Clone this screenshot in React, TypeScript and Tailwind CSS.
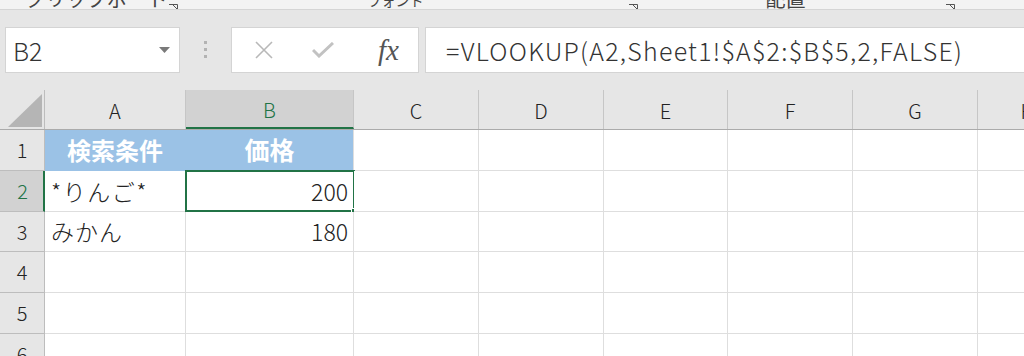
import React from "react";

const cols = [
  { key: "A", w: "w-[141px]" },
  { key: "B", w: "w-[168px]" },
  { key: "C", w: "w-[125px]" },
  { key: "D", w: "w-[125px]" },
  { key: "E", w: "w-[124px]" },
  { key: "F", w: "w-[125px]" },
  { key: "G", w: "w-[125px]" },
  { key: "H", w: "w-[100px]" },
];

const rows = [
  { n: 1, h: "h-[41px]" },
  { n: 2, h: "h-[41px]" },
  { n: 3, h: "h-[40px]" },
  { n: 4, h: "h-[41px]" },
  { n: 5, h: "h-[41px]" },
  { n: 6, h: "h-[41px]" },
];

const jp = { fontFamily: '"Noto Sans CJK JP", "Noto Sans", sans-serif' };

function Launcher({ className }: { className: string }) {
  return (
    <svg className={className} width="9" height="5" viewBox="0 0 9 5">
      <path d="M0 0.5h8.5V5" stroke="#555" strokeWidth="1" fill="none" />
      <path d="M4 1l4 4" stroke="#555" strokeWidth="1" />
    </svg>
  );
}

function RibbonStrip() {
  return (
    <div className="h-[10px] overflow-hidden border-b border-[#d5d5d5] bg-[#f3f3f3] leading-none text-[#444]">
      <div className="flex h-full items-start">
        <span className="ml-[25px] -mt-[11px] text-[20px] tracking-[0.5px]">クリップボード</span>
        <Launcher className="ml-[0px] mt-[4px]" />
        <span className="ml-[190px] -mt-[7px] text-[14px]">フォント</span>
        <Launcher className="ml-[205px] mt-[4px]" />
        <span className="ml-[128px] -mt-[11px] text-[20px]">配置</span>
        <Launcher className="ml-[140px] mt-[4px]" />
      </div>
    </div>
  );
}

function FormulaBar() {
  return (
    <div className="flex h-[80px] items-start bg-[#e6e6e6] pt-[17px]">
      <div className="ml-[5px] flex h-[46px] w-[175px] items-center justify-between border border-[#d4d4d4] bg-white pl-[7px] pr-[9px]">
        <span className="text-[25px] font-light leading-none text-[#333]">B2</span>
        <svg width="11" height="6" viewBox="0 0 11 6">
          <path d="M0 0h11L5.5 6z" fill="#7a7a7a" />
        </svg>
      </div>
      <div className="ml-[24px] mt-[14px] flex flex-col gap-[4px]">
        <span className="block h-[3px] w-[3px] bg-[#b3b3b3]" />
        <span className="block h-[3px] w-[3px] bg-[#b3b3b3]" />
        <span className="block h-[3px] w-[3px] bg-[#b3b3b3]" />
      </div>
      <div className="ml-[24px] flex h-[46px] w-[188px] items-center border border-[#d4d4d4] bg-white">
        <svg className="ml-[22px]" width="20" height="18" viewBox="0 0 20 18">
          <path d="M2 1l16 16M18 1L2 17" stroke="#b8b8b8" strokeWidth="1.6" />
        </svg>
        <svg className="ml-[38px]" width="22" height="16" viewBox="0 0 22 16">
          <path d="M1 8l6 6L21 1" stroke="#c2c2c2" strokeWidth="3" fill="none" />
        </svg>
        <span
          className="ml-[44px] text-[29px] italic leading-none text-[#555]"
          style={{ fontFamily: '"Liberation Serif", serif' }}
        >
          fx
        </span>
      </div>
      <div className="ml-[6px] flex h-[46px] flex-1 items-center border border-r-0 border-[#d4d4d4] bg-white pl-[20px]">
        <span className="text-[25px] font-light leading-none tracking-[1.25px] text-[#333]">
          =VLOOKUP(A2,Sheet1!$A$2:$B$5,2,FALSE)
        </span>
      </div>
    </div>
  );
}

function HeaderRow() {
  return (
    <div className="flex h-[40px] border-b border-[#ababab] bg-[#e6e6e6]">
      <div className="flex w-[45px] shrink-0 items-end justify-end border-r border-[#bdbdbd] pb-[2px] pr-[2px]">
        <svg width="34" height="33" viewBox="0 0 34 33">
          <path d="M34 0v33H0z" fill="#b5b5b5" />
        </svg>
      </div>
      {cols.map((c) =>
        c.key === "B" ? (
          <div
            key={c.key}
            className={`${c.w} flex shrink-0 items-center justify-center border-b-2 border-r border-b-[#217346] border-r-[#c6c6c6] bg-[#d2d2d2] pt-[2px] text-[20px] font-light text-[#217346]`}
          >
            {c.key}
          </div>
        ) : (
          <div
            key={c.key}
            className={`${c.w} flex shrink-0 items-center justify-center border-r border-[#c6c6c6] pt-[2px] text-[20px] font-light text-[#222]`}
          >
            {c.key}
          </div>
        )
      )}
    </div>
  );
}

function cellContent(r: number, c: string) {
  if (r === 1 && c === "A") return <span className="text-[24px] font-bold text-white">検索条件</span>;
  if (r === 1 && c === "B") return <span className="text-[25px] font-bold text-white">価格</span>;
  if (r === 2 && c === "A") return <span className="tracking-[1.5px]">*りんご*</span>;
  if (r === 2 && c === "B") return <span>200</span>;
  if (r === 3 && c === "A") return <span className="tracking-[1px]">みかん</span>;
  if (r === 3 && c === "B") return <span>180</span>;
  return null;
}

function Row({ n, h }: { n: number; h: string }) {
  const active = n === 2;
  return (
    <div className={`flex ${h}`}>
      <div
        className={`flex w-[45px] shrink-0 items-center justify-center border-b border-[#bdbdbd] text-[20px] font-light ${
          active
            ? "border-r-2 border-r-[#217346] bg-[#d2d2d2] pl-[2px] text-[#217346]"
            : "border-r border-r-[#bdbdbd] bg-[#e6e6e6] text-[#222]"
        }`}
      >
        {n}
      </div>
      {cols.map((c) => {
        const blue = n === 1 && (c.key === "A" || c.key === "B");
        const align =
          n === 1 ? "justify-center" : c.key === "B" ? "justify-end pr-[5px]" : "justify-start pl-[6px]";
        return (
          <div
            key={c.key}
            className={`${c.w} relative flex shrink-0 items-center border-b border-r border-[#dedede] text-[23px] font-light text-[#222] ${align} ${
              blue ? "border-b-[#9bc2e6] bg-[#9bc2e6]" : "bg-white"
            } ${blue && c.key === "A" ? "border-r-[#9bc2e6]" : ""}`}
          >
            {cellContent(n, c.key)}
            {active && c.key === "B" && (
              <>
                <div className="pointer-events-none absolute -left-[1px] -top-[1px] bottom-[-1px] right-[-2px] border-2 border-[#217346]" />
                <div className="absolute bottom-[-4px] right-[-5px] h-[7px] w-[7px] border border-white bg-[#217346]" />
              </>
            )}
          </div>
        );
      })}
    </div>
  );
}

export default function App() {
  return (
    <div className="h-[356px] w-[1024px] overflow-hidden bg-white" style={jp}>
      <RibbonStrip />
      <FormulaBar />
      <HeaderRow />
      {rows.map((r) => (
        <Row key={r.n} n={r.n} h={r.h} />
      ))}
    </div>
  );
}
